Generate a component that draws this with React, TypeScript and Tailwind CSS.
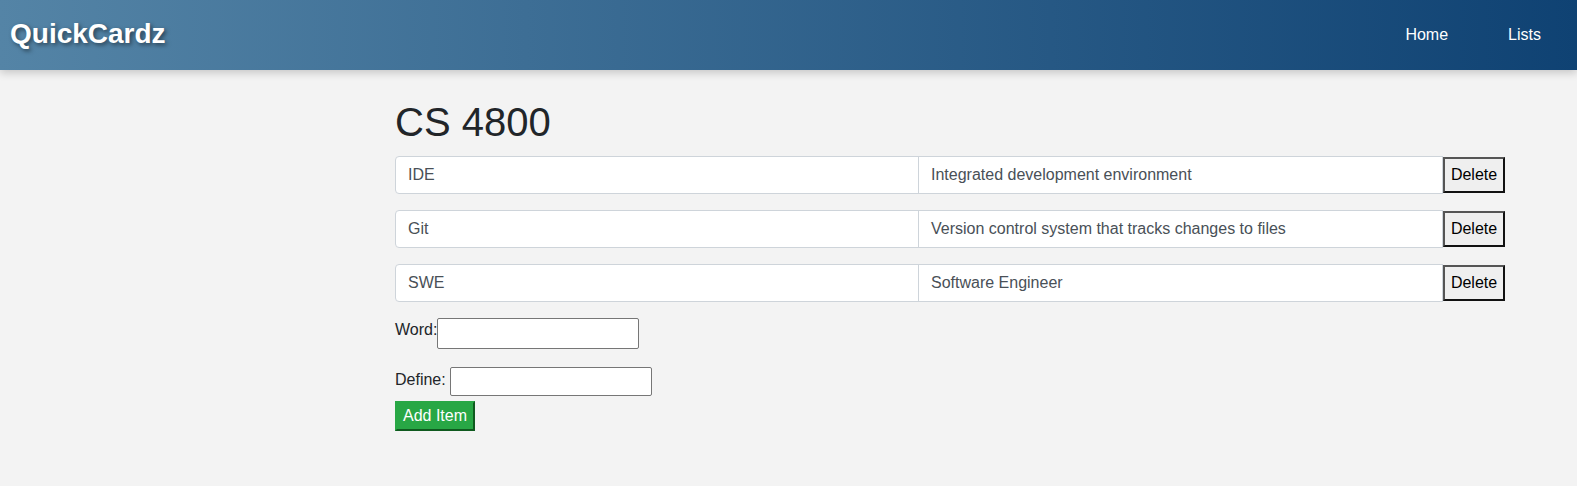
import React from "react";

const rows = [
  { word: "IDE", def: "Integrated development environment" },
  { word: "Git", def: "Version control system that tracks changes to files" },
  { word: "SWE", def: "Software Engineer" },
];

export default function App() {
  return (
    <div className="min-h-screen bg-[#f3f3f3] font-['Liberation_Sans',Arial,sans-serif] text-[#212529]">
      <header className="relative z-10 flex h-[70px] items-center justify-between bg-[linear-gradient(to_right,#5484a6,#0f4273)] shadow-[0_3px_8px_rgba(0,0,0,0.18)]">
        <div className="pl-[10px] pb-[3px] text-[28px] font-bold leading-none text-white [text-shadow:2px_2px_4px_rgba(0,0,0,0.5)]">
          QuickCardz
        </div>
        <nav className="flex pr-[6px] text-[16px] text-white">
          <a className="px-[30px]">Home</a>
          <a className="px-[30px]">Lists</a>
        </nav>
      </header>
      <main className="pl-[395px] pt-[28px] pb-[55px]">
        <h1 className="mb-[10px] text-[40px] leading-[48px] font-normal text-[#212529]">CS 4800</h1>
        <div className="w-[1110px]">
          {rows.map((r) => (
            <div key={r.word} className="mb-[16px] flex h-[38px] items-center">
              <div className="flex h-[38px] w-[524px] items-center rounded-l-[4px] border border-[#ced4da] bg-white px-[12px] text-[16px] text-[#495057]">
                {r.word}
              </div>
              <div className="-ml-px flex h-[38px] flex-1 items-center border border-[#ced4da] bg-white px-[12px] text-[16px] text-[#495057]">
                {r.def}
              </div>
              <button className="h-[36px] w-[62px] border-2 border-t-[#555] border-l-[#555] border-r-[#111] border-b-[#111] bg-[#efefef] text-[16px] text-black">
                Delete
              </button>
            </div>
          ))}
        </div>
        <div className="flex items-start">
          <span className="text-[16px] leading-[24px]">Word:</span>
          <input className="h-[31px] w-[202px] rounded-[2px] border border-[#767676] bg-white" />
        </div>
        <div className="mt-[18px] flex items-start">
          <span className="mt-[1px] whitespace-pre text-[16px] leading-[24px]">Define: </span>
          <input className="h-[29px] w-[202px] rounded-[2px] border border-[#767676] bg-white" />
        </div>
        <button className="mt-[5px] h-[30px] w-[80px] border-2 border-t-[#28a745] border-l-[#28a745] border-r-[#0f5a1f] border-b-[#0f5a1f] bg-[#28a745] text-[16px] text-white">
          Add Item
        </button>
      </main>
    </div>
  );
}
